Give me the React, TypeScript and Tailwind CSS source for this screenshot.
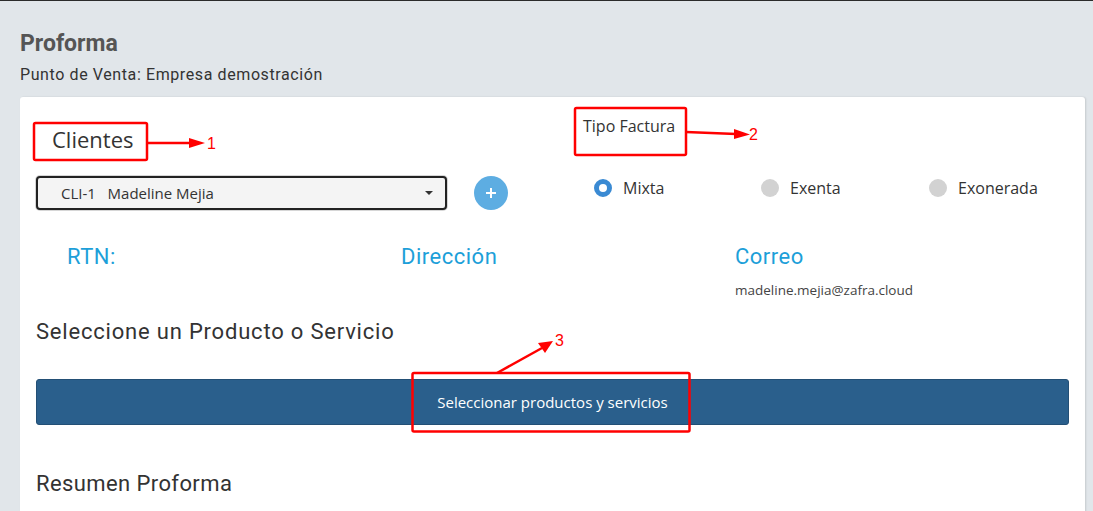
import React from "react";

const heading = { fontFamily: "Roboto, 'Liberation Sans', sans-serif" };
const body = { fontFamily: "'Open Sans', 'Liberation Sans', sans-serif" };

function Radio({ label, checked }: { label: string; checked?: boolean }) {
  return (
    <label className="flex items-center gap-[11px] text-[16px] text-[#333]" style={body}>
      {checked ? (
        <span className="w-[18px] h-[18px] rounded-full border-[5px] border-[#3a8ad3] bg-white" />
      ) : (
        <span className="w-[18px] h-[18px] rounded-full bg-[#d2d2d2]" />
      )}
      {label}
    </label>
  );
}

function Annotations() {
  return (
    <svg
      className="absolute inset-0 pointer-events-none"
      width="1093"
      height="511"
      viewBox="0 0 1093 511"
    >
      <g fill="none" stroke="#ff0000" strokeWidth="2.5">
        <rect x="34" y="122" width="113" height="37" rx="1.5" />
        <rect x="575" y="107" width="111" height="47" rx="1.5" />
        <rect x="412.5" y="372" width="277" height="58.5" rx="1.5" />
        <line x1="147" y1="142" x2="191" y2="142" />
        <line x1="686" y1="131" x2="736" y2="133" />
        <line x1="497" y1="372" x2="542" y2="347" />
      </g>
      <g fill="#ff0000">
        <polygon points="189,137 205,142 189,147" />
        <polygon points="734,128 750,133.5 734,138" />
        <polygon points="538,342 553,340 545,352" />
      </g>
      <g fill="#ff0000" fontFamily="'Liberation Sans', sans-serif" fontSize="16">
        <text x="207" y="148">1</text>
        <text x="749" y="139">2</text>
        <text x="555" y="345">3</text>
      </g>
    </svg>
  );
}

export default function App() {
  return (
    <div className="relative w-[1093px] h-[511px] overflow-hidden bg-[#e1e6ea] border-t border-[#2b2b2b]">
      <div className="px-5 pt-[28px]">
        <h1 className="text-[23px] leading-[30px] font-bold text-[#555]" style={heading}>
          Proforma
        </h1>
        <p className="mt-[6px] text-[16px] leading-[20px] text-[#333] tracking-[0.6px]" style={heading}>
          Punto de Venta: Empresa demostración
        </p>

        <div className="mt-[12px] w-[1065px] h-[420px] bg-white rounded-[3px] shadow-[1px_0_2px_rgba(0,0,0,0.12)] px-4">
          <div className="flex">
            <div className="w-[517px]">
              <div className="pt-[27px] pl-4 text-[22px] leading-[30px] text-[#333]" style={body}>
                Clientes
              </div>
              <div className="mt-[22px] flex items-center">
                <div
                  className="w-[411px] h-[34px] rounded-[4px] border-2 border-[#222] bg-[#f4f4f4] ring-1 ring-[#d6d6d6] flex items-center justify-between pl-[23px] pr-[12px] text-[15px] text-[#333]"
                  style={body}
                >
                  <span>
                    CLI-1&nbsp;&nbsp;&nbsp;Madeline Mejia
                  </span>
                  <span className="w-0 h-0 border-l-[4px] border-r-[4px] border-t-[4px] border-l-transparent border-r-transparent border-t-[#333]" />
                </div>
                <button className="ml-[27px] w-[34px] h-[34px] rounded-full bg-[#5dade2] flex items-center justify-center text-white">
                  <svg width="12" height="12" viewBox="0 0 12 12">
                    <path d="M6 1v10M1 6h10" stroke="white" strokeWidth="2" />
                  </svg>
                </button>
              </div>
            </div>
            <div className="flex-1">
              <div className="pt-[18px] pl-[30px] text-[16px] leading-[22px] text-[#333]" style={body}>
                Tipo Factura
              </div>
              <div className="mt-[39px] pl-[41px] flex">
                <div className="w-[167px]">
                  <Radio label="Mixta" checked />
                </div>
                <div className="w-[168px]">
                  <Radio label="Exenta" />
                </div>
                <div>
                  <Radio label="Exonerada" />
                </div>
              </div>
            </div>
          </div>

          <div className="mt-[32px] pl-[31px] grid grid-cols-3 text-[22px] leading-[30px] text-[#1d9fd9]" style={heading}>
            <div className="tracking-[0.5px]">RTN:</div>
            <div className="tracking-[0.5px]">Dirección</div>
            <div>
              <div className="tracking-[0.5px]">Correo</div>
              <div className="mt-[9px] text-[13.5px] leading-[18px] text-[#444]" style={body}>
                madeline.mejia@zafra.cloud
              </div>
            </div>
          </div>

          <h2 className="mt-[18px] text-[22px] leading-[30px] text-[#333] tracking-[0.8px]" style={heading}>
            Seleccione un Producto o Servicio
          </h2>

          <button
            className="mt-[32px] w-full h-[46px] rounded-[3px] bg-[#2a5f8c] border border-[#234f75] text-white text-[15px]"
            style={body}
          >
            Seleccionar productos y servicios
          </button>

          <h2 className="mt-[44px] text-[22px] leading-[30px] text-[#333] tracking-[0.4px]" style={heading}>
            Resumen Proforma
          </h2>
        </div>
      </div>
      <Annotations />
    </div>
  );
}
